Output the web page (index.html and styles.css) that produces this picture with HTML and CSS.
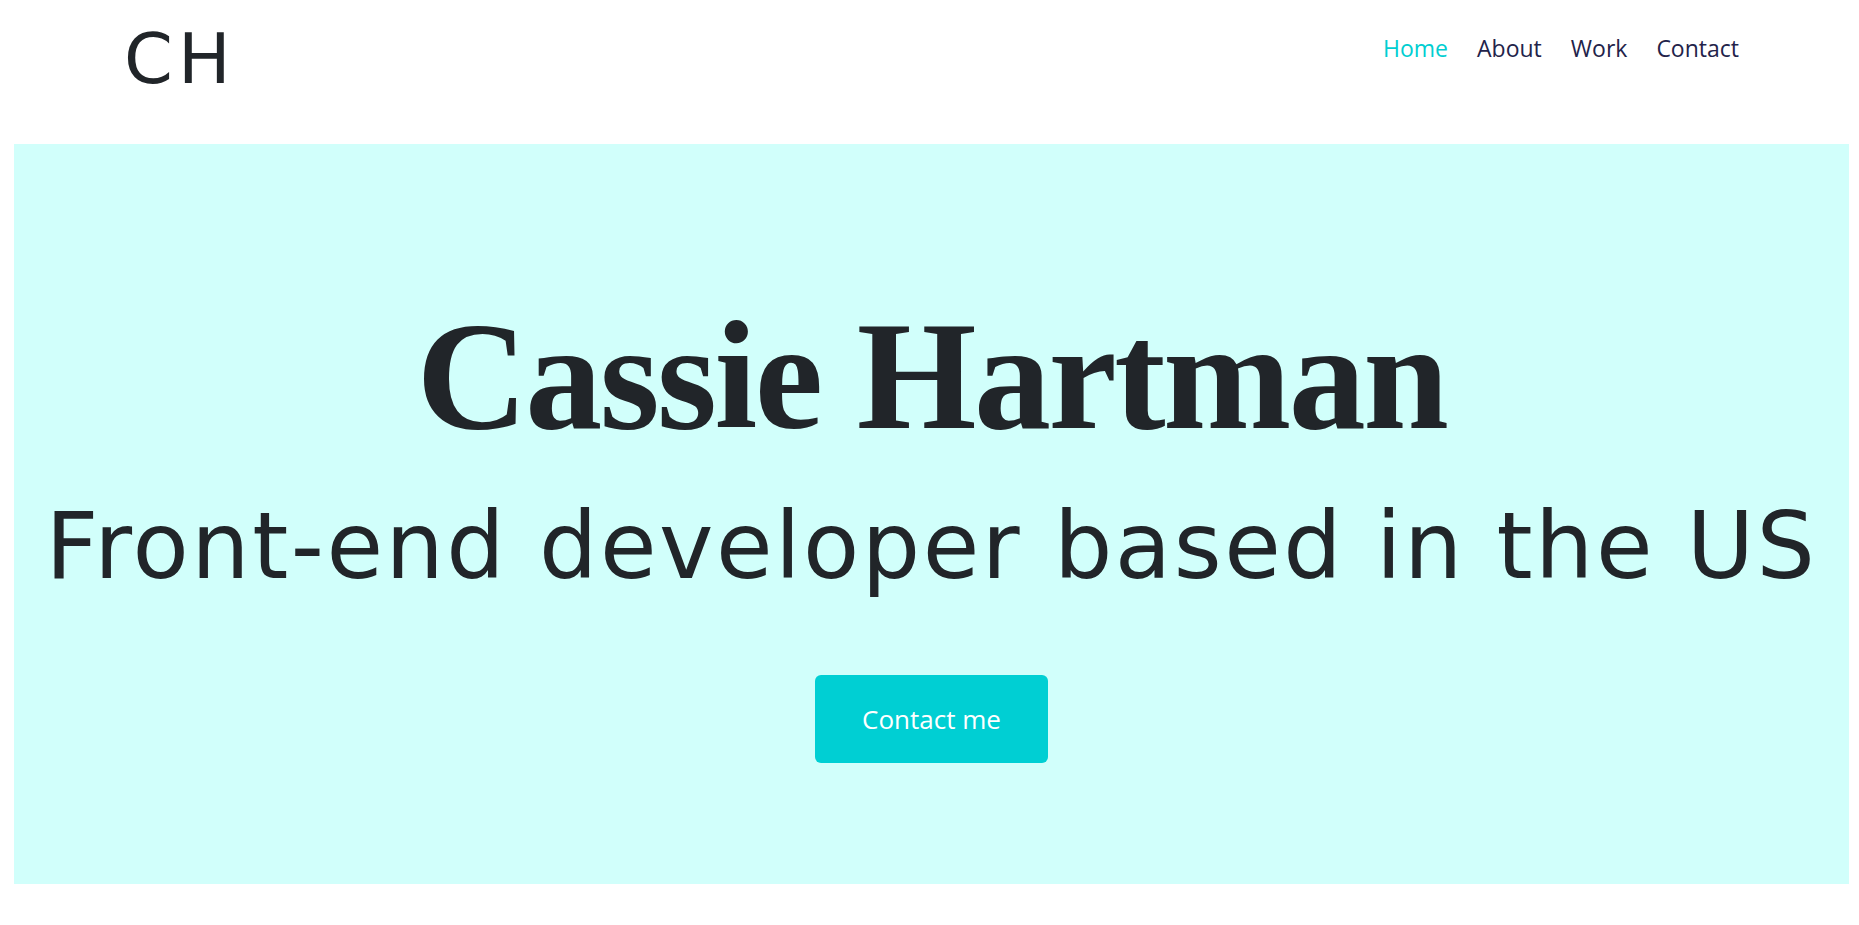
FILE: index.html
```html
<!DOCTYPE html>
<html lang="en">
<head>
<meta charset="utf-8">
<title>Cassie Hartman</title>
<link rel="stylesheet" href="styles.css">
</head>
<body>
<header class="site-header">
  <div class="logo">CH</div>
  <nav class="nav">
    <a class="nav-link active" href="#">Home</a>
    <a class="nav-link" href="#">About</a>
    <a class="nav-link" href="#">Work</a>
    <a class="nav-link" href="#">Contact</a>
  </nav>
</header>
<section class="hero">
  <h1 class="hero-name">Cassie Hartman</h1>
  <h2 class="hero-role">Front-end developer based in the US</h2>
  <a class="hero-btn" href="#">Contact me</a>
</section>
</body>
</html>
```

FILE: styles.css
```css
* { box-sizing: border-box; }
html, body { margin: 0; padding: 0; background: #ffffff; }
body { color: #212529; font-family: "Open Sans", "Noto Sans", sans-serif; }

.site-header {
  height: 144px;
  display: flex;
  justify-content: space-between;
  align-items: flex-start;
  padding: 0 120px 0 124px;
}
.logo {
  font-family: "DejaVu Sans", sans-serif;
  font-size: 70px;
  line-height: 1;
  margin-top: 24px;
  color: #212529;
  letter-spacing: 5px;
}
.nav {
  display: flex;
  gap: 29px;
  margin-top: 37px;
}
.nav-link {
  font-family: "Open Sans", sans-serif;
  font-size: 23px;
  line-height: 1;
  color: #23234a;
  text-decoration: none;
}
.nav-link.active { color: #00ced1; }

.hero {
  margin: 0 10px 0 14px;
  height: 740px;
  background: #d1fffb;
  display: flex;
  flex-direction: column;
  align-items: center;
}
.hero-name {
  margin: 155px 0 0;
  font-family: "Liberation Serif", serif;
  font-weight: 700;
  font-size: 154px;
  line-height: 1;
  letter-spacing: -2.5px;
  color: #212529;
}
.hero-role {
  margin: 48px 0 0;
  font-family: "DejaVu Sans", sans-serif;
  font-weight: 400;
  font-size: 92px;
  line-height: 1;
  letter-spacing: 2.5px;
  color: #212529;
  white-space: nowrap;
}
.hero-btn {
  margin-top: 82px;
  display: inline-block;
  background: #00cfd3;
  color: #ffffff;
  font-family: "Open Sans", sans-serif;
  font-size: 26px;
  line-height: 1;
  padding: 31px 47px;
  border-radius: 6px;
  text-decoration: none;
}
```
